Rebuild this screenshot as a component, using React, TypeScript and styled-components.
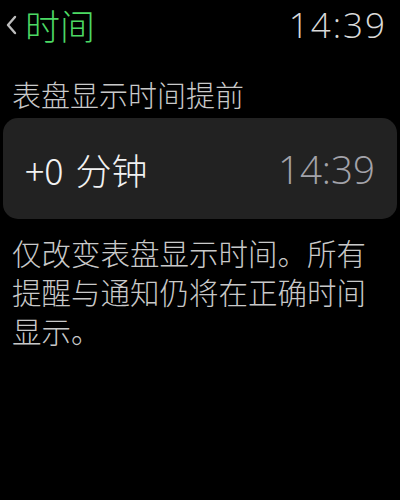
import * as React from "react";
import styled, { createGlobalStyle } from "styled-components";

const GlobalStyle = createGlobalStyle`
  html, body {
    margin: 0;
    padding: 0;
    background: #000;
  }
  body {
    font-family: "Noto Sans CJK SC", "Open Sans", sans-serif;
    font-weight: 300;
    -webkit-font-smoothing: antialiased;
  }
`;

const Screen = styled.div`
  width: 400px;
  height: 500px;
  background: #000;
  box-sizing: border-box;
  padding: 4px 3px 0;
  overflow: hidden;
`;

const NavBar = styled.div`
  display: flex;
  align-items: center;
  justify-content: space-between;
  padding: 0 10px 0 2px;
`;

const BackLink = styled.div`
  display: flex;
  align-items: center;
  gap: 8px;
`;

const NavTitle = styled.span`
  color: #4cd964;
  font-size: 35px;
  line-height: 40px;
`;

const Clock = styled.div<{ $large?: boolean }>`
  font-family: "Open Sans", "Noto Sans", sans-serif;
  font-size: ${p => (p.$large ? 38.5 : 35)}px;
  font-weight: 300;
  color: ${p => (p.$large ? "#a3a3aa" : "#d9d9d9")};
  letter-spacing: ${p => (p.$large ? 0 : 2)}px;
  line-height: 1.2;
`;

const SectionTitle = styled.div`
  margin: 30px 0 0 9px;
  color: #c9c9c9;
  font-size: 29px;
  line-height: 36px;
`;

const Card = styled.div`
  display: flex;
  align-items: center;
  justify-content: space-between;
  height: 101px;
  margin-top: 6px;
  padding: 2px 22px 0;
  box-sizing: border-box;
  border-radius: 15px;
  background: #222;
`;

const Offset = styled.div`
  color: #f2f2f2;
  font-size: 36px;
  word-spacing: 4px;
  line-height: 1.2;
`;

const Note = styled.p`
  margin: 14px 0 0 9px;
  color: #c9c9c9;
  font-size: 29.5px;
  line-height: 39px;
`;

const Chevron = () => (
  <svg width="12" height="20" viewBox="0 0 12 20">
    <path d="M10 2 L3 10 L10 18" fill="none" stroke="#bdbdbd" strokeWidth="2.4" strokeLinecap="round" strokeLinejoin="round" />
  </svg>
);

export default function App() {
  return (
    <Screen>
      <GlobalStyle />
      <NavBar>
        <BackLink>
          <Chevron />
          <NavTitle>时间</NavTitle>
        </BackLink>
        <Clock>14:39</Clock>
      </NavBar>
      <SectionTitle>表盘显示时间提前</SectionTitle>
      <Card>
        <Offset>+0 分钟</Offset>
        <Clock $large>14:39</Clock>
      </Card>
      <Note>
        仅改变表盘显示时间。所有
        <br />
        提醒与通知仍将在正确时间
        <br />
        显示。
      </Note>
    </Screen>
  );
}
